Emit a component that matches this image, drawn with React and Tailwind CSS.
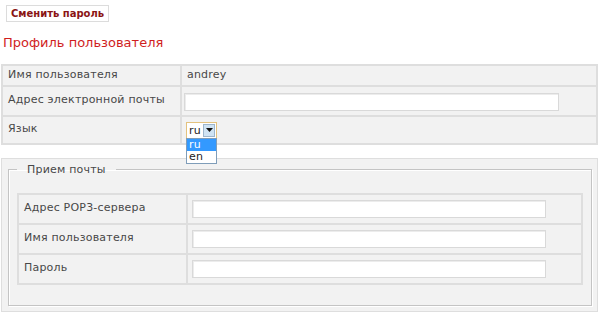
import React from "react";

const FONT = "font-['DejaVu_Sans','Liberation_Sans',sans-serif]";

const TextInput = ({ className = "" }) => (
  <div
    className={`h-[18px] bg-white border border-[#d9d9d9] shadow-[inset_1px_1px_0_#ececec] ${className}`}
  />
);

const LangSelect = () => (
  <div className="relative mt-[5px] ml-[4px] w-[31px]">
    <div className="flex h-[17px] border border-[#e3c27e] bg-white">
      <span className="flex-1 pl-[2px] text-[11px] leading-[15px] text-[#222]">ru</span>
      <span className="my-[1px] mr-[1px] flex w-[12px] items-center justify-center border border-[#9db6cc] bg-[#cfe3f3]">
        <svg width="7" height="4" viewBox="0 0 7 4">
          <path d="M0 0h7L3.5 4z" fill="#111" />
        </svg>
      </span>
    </div>
    {/* open dropdown list */}
    <div className="absolute left-0 top-[16px] z-10 w-[31px] border border-[#7f9db9] bg-white text-[11px] leading-[12px]">
      <div className="bg-[#3399ff] pl-[2px] text-white">ru</div>
      <div className="pl-[2px] text-[#222]">en</div>
    </div>
  </div>
);

const Row = ({ label, h, children, labelW = "w-[179px]", labelPad = "pl-[5px]" }) => (
  <div className={`flex ${h}`}>
    <div className={`${labelW} shrink-0 border border-[#dedede] ${labelPad} flex items-center whitespace-nowrap`}>
      {label}
    </div>
    <div className="flex-1 border border-[#dedede]">{children}</div>
  </div>
);

export default function App() {
  return (
    <div className={`w-[600px] h-[312px] overflow-hidden bg-white ${FONT} text-[11px] tracking-[0.2px] text-[#484848]`}>
      {/* top action */}
      <div className="pt-[5px] pl-[6px]">
        <button className="h-[17px] w-[103px] whitespace-nowrap border border-[#dcdcdc] bg-white text-[10px] font-bold leading-[15px] tracking-normal text-[#8a1414]">
          Сменить пароль
        </button>
      </div>

      <h1 className="mt-[10px] pl-[3px] text-[13px] leading-[20px] tracking-normal text-[#d01e1e]">
        Профиль пользователя
      </h1>

      {/* profile table */}
      <div className="mx-[1px] mt-[11px] w-[597px] border border-[#dedede] bg-[#f2f2f2]">
        <Row label="Имя пользователя" h="h-[21px]">
          <div className="flex h-full items-center pl-[5px]">andrey</div>
        </Row>
        <Row label="Адрес электронной почты" h="h-[30px]">
          <TextInput className="mt-[6px] ml-[2px] w-[375px]" />
        </Row>
        <Row label="Язык" h="h-[28px]">
          <LangSelect />
        </Row>
      </div>

      {/* mail settings */}
      <div className="mx-[1px] mt-[13px] h-[154px] w-[597px] border border-[#dedede] bg-[#f2f2f2] pt-[4px] pl-[6px] pr-[5px]">
        <fieldset className="border border-[#c4c4c4] shadow-[inset_1px_1px_0_#fff,1px_1px_0_#fff] px-[8px] pb-[20px]">
          <legend className="px-[10px] text-[11px] leading-[14px]">
            Прием почты
          </legend>
          <div className="mt-[16px] border border-[#dedede]">
            <Row label="Адрес POP3-сервера" h="h-[30px]" labelW="w-[169px]">
              <TextInput className="mt-[5px] ml-[4px] w-[354px]" />
            </Row>
            <Row label="Имя пользователя" h="h-[30px]" labelW="w-[169px]">
              <TextInput className="mt-[5px] ml-[4px] w-[354px]" />
            </Row>
            <Row label="Пароль" h="h-[30px]" labelW="w-[169px]">
              <TextInput className="mt-[5px] ml-[4px] w-[354px]" />
            </Row>
          </div>
        </fieldset>
      </div>
    </div>
  );
}
